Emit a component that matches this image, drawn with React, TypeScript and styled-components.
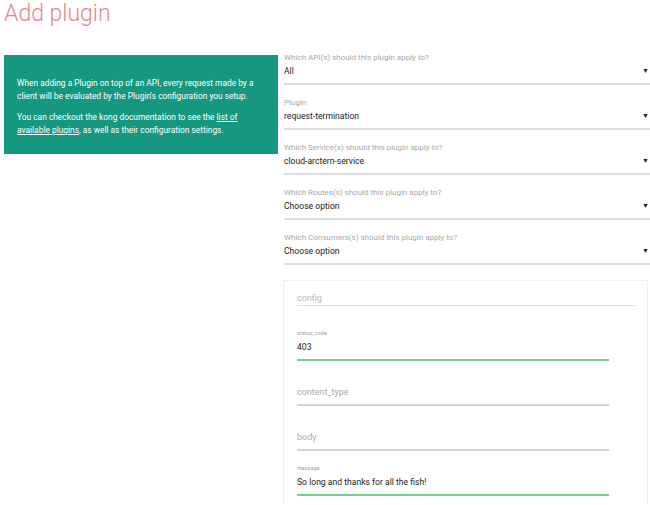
import React from "react";
import styled, { createGlobalStyle } from "styled-components";

const Global = createGlobalStyle`
  html, body { margin: 0; padding: 0; background: #fff; }
  body { font-family: Roboto, "Noto Sans", "Liberation Sans", sans-serif; width: 650px; height: 505px; overflow: hidden; }
`;

const Page = styled.div`
  padding-left: 4px;
  width: 646px;
`;

const Title = styled.h1`
  margin: 0;
  font-size: 23px;
  line-height: 28px;
  font-weight: 300;
  color: #ea8492;
  height: 52px;
`;

const Row = styled.div`
  display: flex;
  align-items: flex-start;
  gap: 6px;
`;

const InfoBox = styled.div`
  width: 274px;
  box-sizing: border-box;
  margin-top: 3px;
  padding: 22px 13px 17px;
  background: #16977f;
  color: #fff;
  font-size: 8.4px;
  line-height: 13px;
  p { margin: 0 0 8px; }
  p:last-child { margin: 0; }
  a { color: #fff; text-decoration: underline; }
`;

const Column = styled.div`
  flex: 1;
  display: flex;
  flex-direction: column;
`;

const SelectField = styled.div`
  margin-bottom: 12px;
  padding-bottom: 5px;
  border-bottom: 2px solid #dcdcdc;
`;

const Label = styled.div`
  font-size: 8px;
  line-height: 12px;
  color: #a8a8a8;
`;

const SelectValue = styled.div`
  display: flex;
  justify-content: space-between;
  align-items: center;
  font-size: 8.6px;
  line-height: 14px;
  color: #222;
`;

const Arrow = styled.span`
  font-size: 7px;
  margin-right: 1px;
  color: #222;
`;

const ConfigPanel = styled.div`
  margin-top: 3px;
  margin-left: -1px;
  margin-right: 2px;
  padding: 10px 11px 8px 13px;
  border: 1px solid #f0f0f0;
  border-bottom: none;
`;

const ConfigHead = styled.div`
  font-size: 9px;
  line-height: 14px;
  color: #b8b8b8;
  border-bottom: 1px solid #dedede;
  margin-bottom: 22px;
`;

const InputField = styled.div<{ $active?: boolean }>`
  width: 312px;
  margin-bottom: 12px;
  padding-bottom: 3px;
  border-bottom: 2px solid ${(p) => (p.$active ? "#72cf8e" : "#d4d4d4")};
  &:last-child { margin-bottom: 0; }
`;

const SmallLabel = styled.div`
  font-size: 5.5px;
  line-height: 10px;
  height: 10px;
  color: #a0a0a0;
`;

const InputValue = styled.div<{ $placeholder?: boolean }>`
  font-size: ${(p) => (p.$placeholder ? "9px" : "8.6px")};
  line-height: 18px;
  color: ${(p) => (p.$placeholder ? "#aaaaaa" : "#222")};
`;

const selects = [
  { label: "Which API(s) should this plugin apply to?", value: "All" },
  { label: "Plugin", value: "request-termination" },
  { label: "Which Service(s) should this plugin apply to?", value: "cloud-arctern-service" },
  { label: "Which Routes(s) should this plugin apply to?", value: "Choose option" },
  { label: "Which Consumers(s) should this plugin apply to?", value: "Choose option" },
];

const inputs = [
  { name: "status_code", value: "403" },
  { name: "content_type", value: "" },
  { name: "body", value: "" },
  { name: "message", value: "So long and thanks for all the fish!" },
];

export default function App() {
  return (
    <>
      <Global />
      <Page>
        <Title>Add plugin</Title>
        <Row>
          <InfoBox>
            <p>
              When adding a Plugin on top of an API, every request made by a client will be
              evaluated by the Plugin's configuration you setup.
            </p>
            <p>
              You can checkout the kong documentation to see the{" "}
              <a href="#">list of available plugins</a>, as well as their configuration settings.
            </p>
          </InfoBox>
          <Column>
            {selects.map((s) => (
              <SelectField key={s.label}>
                <Label>{s.label}</Label>
                <SelectValue>
                  <span>{s.value}</span>
                  <Arrow>▼</Arrow>
                </SelectValue>
              </SelectField>
            ))}
            <ConfigPanel>
              <ConfigHead>config</ConfigHead>
              {inputs.map((f) => (
                <InputField key={f.name} $active={!!f.value}>
                  <SmallLabel>{f.value ? f.name : ""}</SmallLabel>
                  <InputValue $placeholder={!f.value}>{f.value || f.name}</InputValue>
                </InputField>
              ))}
            </ConfigPanel>
          </Column>
        </Row>
      </Page>
    </>
  );
}
